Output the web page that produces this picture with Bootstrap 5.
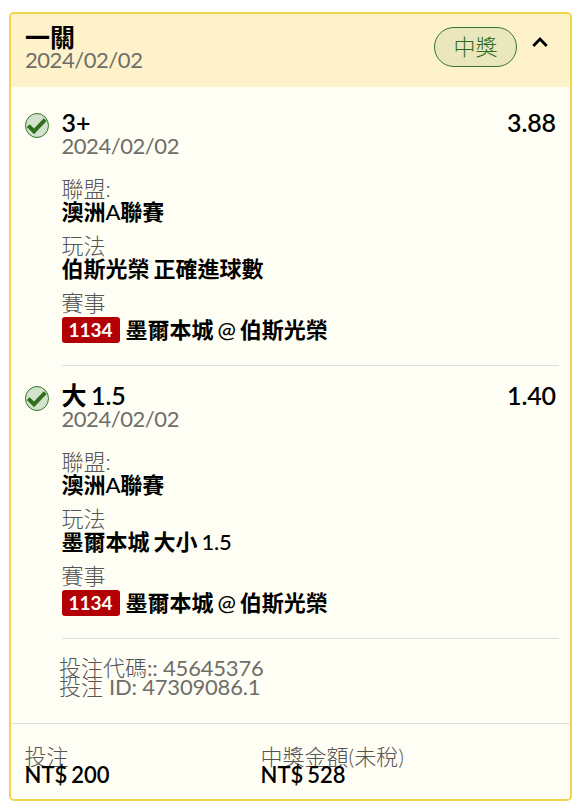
<!DOCTYPE html>
<html lang="zh-Hant">
<head>
<meta charset="utf-8">
<meta name="viewport" content="width=device-width, initial-scale=1">
<title>一關</title>
<link href="https://cdn.jsdelivr.net/npm/bootstrap@5.3.0/dist/css/bootstrap.min.css" rel="stylesheet">
<style>
body{background:#fff;color:#000;font-family:Lato,"Noto Sans CJK TC",sans-serif;font-size:22px;line-height:23px;white-space:nowrap}
.bet-card{width:563px;height:789px;margin:12px 0 0 9px;background:#fffef4;border:2px solid #f2d54a;border-radius:5px;overflow:hidden}
.bet-head{height:73px;background:#fef2cb;padding:12px 22px 0 14px}
.head-date{margin-top:-1px}
.soft{color:#555;font-weight:300}
.num{color:#6e6e6a;font-weight:400;letter-spacing:-.45px}
.refs .num{letter-spacing:-.2px}
.strong{font-weight:600;word-spacing:-1.5px}
.medium{font-weight:500;letter-spacing:-.2px}
.title{font-size:25px;letter-spacing:-.1px}
.status{width:83px;height:40px;margin-top:1px;padding-bottom:2px;border:1px solid #34752a;border-radius:20px;background:#e9e7bb;color:#2b6c21;font-weight:300}
.chevron{margin:9px 0 0 15px}
.leg{height:278px;padding:24px 14px 0 14px}
.leg-next{height:272px;padding-top:18px}
.leg-body{margin-left:12.5px}
.leg-tick{width:24px;height:25px;margin-top:2px}
.pick-date{margin-bottom:20px}
.field{margin-bottom:11px}
.match{height:26px;margin-top:3px;line-height:26px}
.code{width:58px;height:26px;margin-right:6px;border-radius:3px;background:#b30005;color:#fff;font-size:19px;line-height:26px;font-weight:700}
.rule{height:1px;background:#dfdfda}
.leg-rule{margin:0 11px 0 51px}
.refs{height:84px;padding:19px 0 0 48px;line-height:19px}
.totals{padding:24px 13.5px 0;line-height:18px}
.stake{width:236px}
</style>
</head>
<body>
<main class="bet-card">
  <header class="bet-head d-flex align-items-start">
    <div class="flex-grow-1">
      <div class="title strong">一關</div>
      <div class="soft num head-date">2024/02/02</div>
    </div>
    <div class="status d-flex align-items-center justify-content-center">中獎</div>
    <svg class="chevron" width="16" height="16" viewBox="0 0 16 16" fill="none" stroke="#000" stroke-width="2.8"><path d="M1.300 11 8 4l6.700 7"/></svg>
  </header>

  <section class="leg d-flex align-items-start">
    <svg class="leg-tick flex-shrink-0" viewBox="0 0 24 25"><ellipse cx="12" cy="12.500" rx="11.500" ry="12" fill="#d3e3cb" stroke="#34752a"/><path d="M3.200 12.600 9 18.300 20.200 6.600" fill="none" stroke="#2f701d" stroke-width="4"/></svg>
    <div class="leg-body flex-grow-1">
      <div class="d-flex justify-content-between strong title"><span>3+</span><span>3.88</span></div>
      <div class="soft num pick-date">2024/02/02</div>
      <div class="field"><div class="soft">聯盟:</div><div class="strong">澳洲<span class="medium">A</span>聯賽</div></div>
      <div class="field"><div class="soft">玩法</div><div class="strong">伯斯光榮 正確進球數</div></div>
      <div class="soft">賽事</div>
      <div class="match d-flex align-items-center strong"><span class="code text-center">1134</span><span>墨爾本城 <span class="medium">@</span> 伯斯光榮</span></div>
    </div>
  </section>
  <div class="rule leg-rule"></div>

  <section class="leg leg-next d-flex align-items-start">
    <svg class="leg-tick flex-shrink-0" viewBox="0 0 24 25"><ellipse cx="12" cy="12.500" rx="11.500" ry="12" fill="#d3e3cb" stroke="#34752a"/><path d="M3.200 12.600 9 18.300 20.200 6.600" fill="none" stroke="#2f701d" stroke-width="4"/></svg>
    <div class="leg-body flex-grow-1">
      <div class="d-flex justify-content-between strong title"><span>大 1.5</span><span>1.40</span></div>
      <div class="soft num pick-date">2024/02/02</div>
      <div class="field"><div class="soft">聯盟:</div><div class="strong">澳洲<span class="medium">A</span>聯賽</div></div>
      <div class="field"><div class="soft">玩法</div><div class="strong">墨爾本城 大小 <span class="medium">1.5</span></div></div>
      <div class="soft">賽事</div>
      <div class="match d-flex align-items-center strong"><span class="code text-center">1134</span><span>墨爾本城 <span class="medium">@</span> 伯斯光榮</span></div>
    </div>
  </section>
  <div class="rule leg-rule"></div>

  <section class="refs soft">
    <div>投注代碼<span class="num">:: 45645376</span></div>
    <div>投注 <span class="num">ID: 47309086.1</span></div>
  </section>
  <div class="rule"></div>

  <footer class="totals d-flex">
    <div class="stake"><div class="soft">投注</div><div class="strong">NT$ 200</div></div>
    <div><div class="soft">中獎金額(未稅)</div><div class="strong">NT$ 528</div></div>
  </footer>
</main>
<script src="https://cdn.jsdelivr.net/npm/bootstrap@5.3.0/dist/js/bootstrap.bundle.min.js"></script>
</body>
</html>
